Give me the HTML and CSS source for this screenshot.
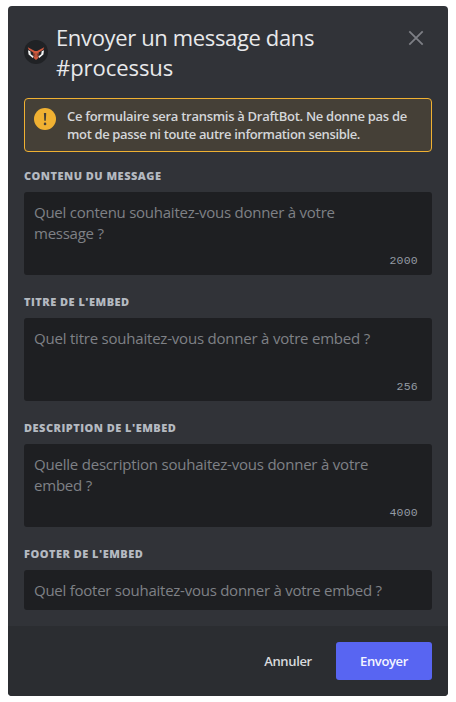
FILE: index.html
```
<!DOCTYPE html>
<html lang="fr">
<head>
<meta charset="utf-8">
<title>Envoyer un message</title>
<link rel="stylesheet" href="styles.css">
</head>
<body>
<main class="modal">
  <header class="header">
    <svg class="avatar" viewBox="0 0 24 24" aria-hidden="true">
      <circle cx="12" cy="12" r="12" fill="#202225"/>
      <path d="M4 10.2 4.6 14.6 8.8 18l1-1.5-3-2.3-.5-3zM20 10.2l-.6 4.4L15.2 18l-1-1.5 3-2.3.5-3z" fill="#f2f2f2"/>
      <path d="M3.8 7.2 10.8 11h2.4l7-3.8-1 2.6-4.6 2.6-.3 5.6-2.3 1.9-2.3-1.9-.3-5.6-4.6-2.6z" fill="#d05a3f"/>
      <path d="M10.8 13v4M13.2 13v4M8.8 14.6h2M13.2 14.6h2" stroke="#59302a" stroke-width=".6" fill="none"/>
    </svg>
    <h1 class="title"><span class="title-main">Envoyer un message dans</span><br><span class="title-channel">#processus</span></h1>
    <svg class="close" viewBox="0 0 16 16" aria-hidden="true"><path d="m1.3 1.3 13.4 13.4M14.7 1.3 1.3 14.7"/></svg>
  </header>
  <section class="content">
    <div class="notice">
      <svg class="warning" viewBox="0 0 22 22" aria-hidden="true">
        <circle cx="11" cy="11" r="11" fill="#f0b132"/>
        <path d="M9.9 5h2.3l-.4 7.8h-1.5z" fill="#454037"/><circle cx="11.05" cy="15.9" r="1.3" fill="#454037"/>
      </svg>
      <p class="notice-text"><span class="notice-first">Ce formulaire sera transmis à DraftBot. Ne donne pas de</span><br><span class="notice-second">mot de passe ni toute autre information sensible.</span></p>
    </div>
    <div class="field">
      <div class="label">Contenu du message</div>
      <div class="input area"><span class="tight">Quel contenu souhaitez-vous donner à votre<br>message ?</span><span class="count">2000</span></div>
    </div>
    <div class="field">
      <div class="label">Titre de l'embed</div>
      <div class="input area"><span>Quel titre souhaitez-vous donner à votre embed ?</span><span class="count">256</span></div>
    </div>
    <div class="field">
      <div class="label">Description de l'embed</div>
      <div class="input area"><span>Quelle description souhaitez-vous donner à votre<br>embed ?</span><span class="count">4000</span></div>
    </div>
    <div class="field">
      <div class="label">Footer de l'embed</div>
      <div class="input"><span class="tight">Quel footer souhaitez-vous donner à votre embed ?</span></div>
    </div>
  </section>
  <footer class="footer">
    <button class="button">Annuler</button>
    <button class="button primary">Envoyer</button>
  </footer>
</main>
</body>
</html>
```
FILE: styles.css
```
* { box-sizing: border-box; }
body {
  margin: 0;
  padding: 6px 8px;
  background: #fff;
  font-family: "Open Sans", "Noto Sans", sans-serif;
}
.modal {
  display: flex;
  flex-direction: column;
  width: 440px;
  height: 690px;
  border-radius: 4px;
  background: #313338;
  overflow: hidden;
}
.header {
  display: flex;
  align-items: center;
  height: 92px;
  padding: 0 24px 0 16px;
}
.avatar { width: 24px; height: 24px; margin-right: 8px; flex: none; }
.title {
  flex: 1;
  margin: 0;
  color: #e8e9eb;
  font-size: 22px;
  font-weight: 400;
  line-height: 30px;
  white-space: nowrap;
}
.title-main { letter-spacing: -.36px; }
.title-channel { letter-spacing: -.05px; }
.close {
  width: 16px;
  height: 16px;
  margin-bottom: 28px;
  fill: none;
  stroke: #7d7f85;
  stroke-width: 1.8;
}
.content {
  display: flex;
  flex-direction: column;
  flex: 1;
  padding: 0 16px;
}
.notice {
  display: flex;
  height: 54px;
  padding: 8px 9px;
  border: 1px solid #f0b132;
  border-radius: 4px;
  background: #454037;
}
.warning { width: 22px; height: 22px; margin: 1px 11px 0 0; flex: none; }
.notice-text {
  margin: 0;
  color: #d4d6d9;
  font-size: 13px;
  font-weight: 600;
  line-height: 18px;
  white-space: nowrap;
}
.notice-first { letter-spacing: -.285px; }
.notice-second { letter-spacing: -.35px; }
.field { margin-top: 16px; }
.field + .field { margin-top: 19px; }
.label {
  height: 16px;
  margin-bottom: 8px;
  color: #b5bac1;
  font-size: 11px;
  font-weight: 800;
  line-height: 15px;
  letter-spacing: .48px;
  text-transform: uppercase;
}
.input {
  display: flex;
  flex-direction: column;
  justify-content: space-between;
  height: 40px;
  padding: 10px;
  border-radius: 3px;
  background: #1e1f22;
  color: #7f8186;
  font-size: 15px;
  line-height: 21px;
  letter-spacing: -.21px;
  white-space: nowrap;
}
.area { height: 83px; padding-bottom: 6px; }
.tight { letter-spacing: -.25px; }
.count {
  align-self: flex-end;
  margin-right: 4px;
  color: #949ba4;
  font: 11.5px/16px "Liberation Mono", monospace;
  letter-spacing: .25px;
}
.footer {
  display: flex;
  justify-content: flex-end;
  height: 70px;
  padding: 16px;
  background: #2b2d31;
}
.button {
  width: 96px;
  height: 38px;
  padding: 0;
  border: 0;
  border-radius: 3px;
  background: transparent;
  color: #d8dadd;
  font: 600 13px/18px "Open Sans", "Noto Sans", sans-serif;
  letter-spacing: -.35px;
}
.primary { background: #5865f2; color: #f4f5ff; }
```
